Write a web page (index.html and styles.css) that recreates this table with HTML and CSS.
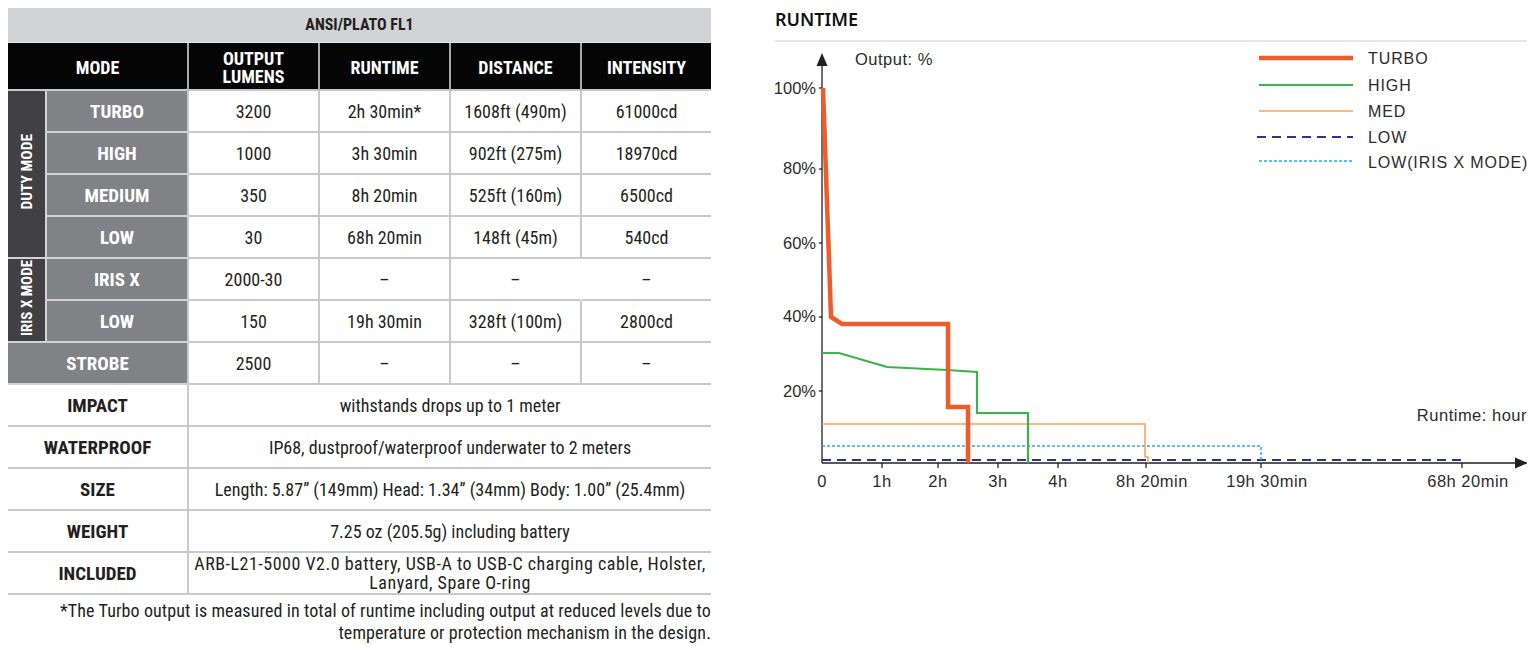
FILE: index.html
```html
<!DOCTYPE html>
<html lang="en">
<head>
<meta charset="utf-8">
<title>ANSI/PLATO FL1 and runtime</title>
<link rel="stylesheet" href="styles.css">
</head>
<body>
<div class="page">
  <section class="specs">
    <table class="spec">
      <colgroup>
        <col class="c-side"><col class="c-mode"><col class="c-num"><col class="c-num"><col class="c-num"><col class="c-last">
      </colgroup>
      <thead>
        <tr class="title-row"><th colspan="6">ANSI/PLATO FL1</th></tr>
        <tr class="head-row">
          <th colspan="2">MODE</th>
          <th class="two">OUTPUT<br>LUMENS</th>
          <th>RUNTIME</th>
          <th>DISTANCE</th>
          <th class="last">INTENSITY</th>
        </tr>
      </thead>
      <tbody>
        <tr>
          <th rowspan="4" class="side"><span>DUTY MODE</span></th>
          <th class="mode">TURBO</th><td>3200</td><td>2h 30min*</td><td>1608ft (490m)</td><td class="last">61000cd</td>
        </tr>
        <tr><th class="mode">HIGH</th><td>1000</td><td>3h 30min</td><td>902ft (275m)</td><td class="last">18970cd</td></tr>
        <tr><th class="mode">MEDIUM</th><td>350</td><td>8h 20min</td><td>525ft (160m)</td><td class="last">6500cd</td></tr>
        <tr><th class="mode">LOW</th><td>30</td><td>68h 20min</td><td>148ft (45m)</td><td class="last">540cd</td></tr>
        <tr>
          <th rowspan="2" class="side"><span class="iris">IRIS X MODE</span></th>
          <th class="mode">IRIS X</th><td>2000-30</td><td>–</td><td class="open">–</td><td class="last">–</td>
        </tr>
        <tr><th class="mode">LOW</th><td>150</td><td>19h 30min</td><td>328ft (100m)</td><td class="last">2800cd</td></tr>
        <tr><th colspan="2" class="mode">STROBE</th><td>2500</td><td>–</td><td>–</td><td class="last">–</td></tr>
        <tr class="info"><th colspan="2">IMPACT</th><td colspan="4" class="last">withstands drops up to 1 meter</td></tr>
        <tr class="info"><th colspan="2">WATERPROOF</th><td colspan="4" class="last">IP68, dustproof/waterproof underwater to 2 meters</td></tr>
        <tr class="info"><th colspan="2">SIZE</th><td colspan="4" class="last">Length: 5.87” (149mm) Head: 1.34” (34mm) Body: 1.00” (25.4mm)</td></tr>
        <tr class="info"><th colspan="2">WEIGHT</th><td colspan="4" class="last">7.25 oz (205.5g) including battery</td></tr>
        <tr class="info"><th colspan="2">INCLUDED</th><td colspan="4" class="last incl">ARB-L21-5000 V2.0 battery, USB-A to USB-C charging cable, Holster,<br>Lanyard, Spare O-ring</td></tr>
      </tbody>
    </table>
    <p class="note">*The Turbo output is measured in total of runtime including output at reduced levels due to<br>temperature or protection mechanism in the design.</p>
  </section>

  <section class="runtime">
    <h2 class="runtime-title">RUNTIME</h2>
    <svg class="chart" width="752" height="460" viewBox="0 0 752 460" xmlns="http://www.w3.org/2000/svg">
      <g transform="translate(-775,-42)">
        <g class="axis">
          <line x1="822" y1="62" x2="822" y2="463"/>
          <line x1="822" y1="463" x2="1517" y2="463"/>
          <line x1="819" y1="88" x2="822" y2="88"/>
          <line x1="819" y1="169" x2="822" y2="169"/>
          <line x1="819" y1="243" x2="822" y2="243"/>
          <line x1="819" y1="317" x2="822" y2="317"/>
          <line x1="819" y1="391" x2="822" y2="391"/>
          <line x1="882" y1="463" x2="882" y2="468"/>
          <line x1="938" y1="463" x2="938" y2="468"/>
          <line x1="998" y1="463" x2="998" y2="468"/>
          <line x1="1058" y1="463" x2="1058" y2="468"/>
          <line x1="1146" y1="463" x2="1146" y2="468"/>
          <line x1="1261" y1="463" x2="1261" y2="468"/>
          <line x1="1462" y1="463" x2="1462" y2="468"/>
        </g>
        <polygon class="arrow" points="822,53 816.5,66 827.5,66"/>
        <polygon class="arrow" points="1528,463 1515,457.5 1515,468.5"/>

        <g class="lbl">
          <text class="wide" x="855" y="65">Output: %</text>
          <text x="816" y="94" text-anchor="end">100%</text>
          <text x="816" y="174" text-anchor="end">80%</text>
          <text x="816" y="249" text-anchor="end">60%</text>
          <text x="816" y="322" text-anchor="end">40%</text>
          <text x="816" y="397" text-anchor="end">20%</text>
          <text class="wide" x="1527" y="421" text-anchor="end">Runtime: hour</text>
          <g class="xl">
            <text x="822" y="487" text-anchor="middle">0</text>
            <text x="882" y="487" text-anchor="middle">1h</text>
            <text x="938" y="487" text-anchor="middle">2h</text>
            <text x="998" y="487" text-anchor="middle">3h</text>
            <text x="1058" y="487" text-anchor="middle">4h</text>
            <text x="1152" y="487" text-anchor="middle">8h 20min</text>
            <text x="1267" y="487" text-anchor="middle">19h 30min</text>
            <text x="1468" y="487" text-anchor="middle">68h 20min</text>
          </g>
        </g>

        <polyline class="s-low" points="822,460 1462,460 1462,463"/>
        <polyline class="s-iris" points="822,446 1261,446 1261,463"/>
        <polyline class="s-med" points="822,424 1145,424 1145,457 1148,457 1148,463"/>
        <polyline class="s-high" points="822,353 839,353 887,367 947,370 977,372 977,413 1028,413 1028,463"/>
        <polyline class="s-turbo" points="823,88 831,317 842,324 948,324 948,407 968,407 968,463"/>

        <line class="s-turbo" x1="1259" y1="58" x2="1353" y2="58"/>
        <line class="s-high" x1="1259" y1="85" x2="1353" y2="85"/>
        <line class="s-med" x1="1259" y1="111" x2="1353" y2="111"/>
        <line class="s-low" x1="1257" y1="137" x2="1353" y2="137"/>
        <line class="s-iris" x1="1259" y1="161" x2="1353" y2="161"/>
        <g class="legend">
          <text x="1368" y="64">TURBO</text>
          <text x="1368" y="91">HIGH</text>
          <text x="1368" y="117">MED</text>
          <text x="1368" y="143">LOW</text>
          <text x="1368" y="168">LOW(IRIS X MODE)</text>
        </g>
      </g>
    </svg>
  </section>
</div>
</body>
</html>
```

FILE: styles.css
```css
* { box-sizing: border-box; }

html, body {
  margin: 0;
  padding: 0;
  background: #ffffff;
}

.page {
  display: flex;
  align-items: flex-start;
  gap: 64px;
  padding: 8px 0 0 8px;
  width: 1537px;
  height: 647px;
  overflow: hidden;
}

/* ---------- spec table ---------- */
.specs {
  width: 703px;
  flex: none;
}

.spec {
  width: 703px;
  border-collapse: separate;
  border-spacing: 0;
  table-layout: fixed;
  font-family: "Liberation Sans Narrow", "Roboto Condensed", "Liberation Sans", Arial, sans-serif;
  color: #231f20;
  font-size: 18px;
}

.c-side { width: 39px; }
.c-mode { width: 142px; }
.c-num { width: 131px; }
.c-last { width: 129px; }

.spec th,
.spec td {
  padding: 2px 0 0;
  text-align: center;
  vertical-align: middle;
  height: 42px;
  border-bottom: 2px solid #c8c9cb;
  border-right: 2px solid #c8c9cb;
  line-height: 18px;
}

.spec td { font-weight: 400; }

.spec .last { border-right: none; }
.spec .open { border-right-color: transparent; }

.title-row th {
  height: 35px;
  padding: 0;
  background: #d1d3d4;
  font-size: 16px;
  font-weight: 700;
  border-right: none;
  border-bottom: 1px solid #e6e7e8;
}

.head-row th {
  height: 48px;
  padding: 3px 0 0;
  background: #050505;
  color: #ffffff;
  font-weight: 700;
  font-size: 18px;
  border-right-color: #a7a9ac;
  border-bottom-color: #c8c9cb;
}
.head-row th.two { line-height: 18px; }

.spec th.side {
  padding: 0;
  background: #414042;
  color: #ffffff;
  font-size: 15.5px;
  font-weight: 700;
  border-bottom-color: #d1d3d4;
  border-right-color: #d1d3d4;
  overflow: hidden;
}
.side span {
  display: inline-block;
  margin: -30px 0;
  writing-mode: vertical-rl;
  transform: rotate(180deg);
  white-space: nowrap;
  line-height: 16px;
}
.side span.iris { font-size: 15px; }

.spec th.mode {
  background: #808285;
  color: #ffffff;
  font-weight: 700;
  font-size: 19px;
  border-bottom-color: #d1d3d4;
}

.info th {
  font-weight: 700;
  font-size: 19px;
  color: #231f20;
}

.info td.incl {
  line-height: 19px;
  padding: 0;
  letter-spacing: 0.5px;
}

.note {
  margin: 5px 0 0;
  text-align: right;
  font-family: "Liberation Sans Narrow", "Roboto Condensed", "Liberation Sans", Arial, sans-serif;
  font-size: 18px;
  letter-spacing: 0.1px;
  line-height: 22px;
  color: #231f20;
}

/* ---------- runtime chart ---------- */
.runtime {
  width: 752px;
  flex: none;
}

.runtime-title {
  margin: 0;
  height: 34px;
  font-family: "Noto Sans", "Open Sans", sans-serif;
  font-weight: 600;
  font-size: 18px;
  line-height: 22px;
  color: #111111;
  border-bottom: 2px solid #e6e6e6;
}

.chart { display: block; }

.axis line {
  stroke: #231f20;
  stroke-width: 1.3;
}
.arrow { fill: #231f20; }

.lbl text {
  font-family: "Liberation Sans", Arial, sans-serif;
  font-size: 16.5px;
  fill: #2b2b2b;
}
.lbl .wide,
.lbl .xl text { letter-spacing: 0.5px; }

.legend text {
  font-family: "Liberation Sans", Arial, sans-serif;
  font-size: 16px;
  letter-spacing: 0.9px;
  fill: #2b2b2b;
}

.s-turbo, .s-high, .s-med, .s-low, .s-iris {
  fill: none;
  stroke-linejoin: miter;
}
.s-turbo { stroke: #f15a29; stroke-width: 4.5; }
.s-high { stroke: #3cb44b; stroke-width: 2.2; }
.s-med { stroke: #f7a35c; stroke-width: 1.6; }
.s-low { stroke: #2e3192; stroke-width: 2; stroke-dasharray: 9 6; }
.s-iris { stroke: #29abe2; stroke-width: 1.5; stroke-dasharray: 3 2; }
```
